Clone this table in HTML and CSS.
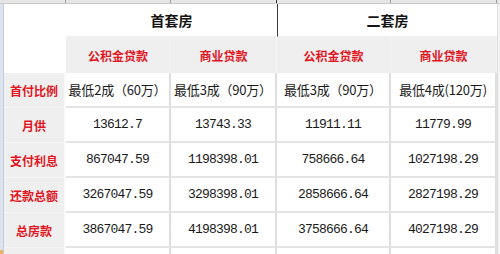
FILE: index.html
```html
<!DOCTYPE html>
<html>
<head>
<meta charset="utf-8">
<link rel="stylesheet" href="styles.css">
</head>
<body>
<div class="sheet">
  <div class="colhead">
    <span class="ch ch-row"></span>
    <span class="ch ch-a"></span>
    <span class="ch ch-b"></span>
    <span class="ch ch-c"></span>
    <span class="ch ch-d"></span>
    <span class="ch ch-e"></span>
  </div>
  <div class="main">
    <div class="rowhead"><span class="rowmark"></span></div>
    <table class="grid">
      <colgroup>
        <col class="w-label"><col class="w-a"><col class="w-b"><col class="w-c"><col class="w-d">
      </colgroup>
      <tr class="r-title">
        <td class="blank"></td>
        <td class="title" colspan="2">首套房</td>
        <td class="title split" colspan="2">二套房</td>
      </tr>
      <tr class="r-sub">
        <td class="blank"></td>
        <th class="sub">公积金贷款</th>
        <th class="sub">商业贷款</th>
        <th class="sub">公积金贷款</th>
        <th class="sub">商业贷款</th>
      </tr>
      <tr class="r-data">
        <th class="label">首付比例</th>
        <td class="cjk">最低2成（60万）</td>
        <td class="cjk">最低3成（90万）</td>
        <td class="cjk">最低3成（90万）</td>
        <td class="cjk">最低4成(120万)</td>
      </tr>
      <tr class="r-data">
        <th class="label">月供</th>
        <td class="num">13612.7</td>
        <td class="num">13743.33</td>
        <td class="num">11911.11</td>
        <td class="num">11779.99</td>
      </tr>
      <tr class="r-data">
        <th class="label">支付利息</th>
        <td class="num">867047.59</td>
        <td class="num">1198398.01</td>
        <td class="num">758666.64</td>
        <td class="num">1027198.29</td>
      </tr>
      <tr class="r-data">
        <th class="label">还款总额</th>
        <td class="num">3267047.59</td>
        <td class="num">3298398.01</td>
        <td class="num">2858666.64</td>
        <td class="num">2827198.29</td>
      </tr>
      <tr class="r-data">
        <th class="label">总房款</th>
        <td class="num">3867047.59</td>
        <td class="num">4198398.01</td>
        <td class="num">3758666.64</td>
        <td class="num">4027198.29</td>
      </tr>
      <tr class="r-tail">
        <th class="label"></th>
        <td></td><td></td><td></td><td></td>
      </tr>
    </table>
    <div class="rightstrip"></div>
  </div>
</div>
</body>
</html>
```
FILE: styles.css
```css
html, body {
  margin: 0;
  padding: 0;
  background: #ffffff;
}
.sheet {
  width: 500px;
  height: 254px;
  overflow: hidden;
  font-family: "Noto Sans CJK SC", "Liberation Sans", sans-serif;
}
.colhead {
  display: flex;
  height: 3px;
  background: #e6e6e6;
  border-bottom: 1px solid #c9c9c9;
}
.ch {
  box-sizing: border-box;
  height: 3px;
  border-right: 1px solid #9a9a9a;
}
.ch-row { width: 66px; }
.ch-a { width: 105px; }
.ch-b { width: 106px; border-right-color: #333; }
.ch-c { width: 114px; }
.ch-d { width: 106px; }
.ch-e { flex: 1; border-right: none; }

.main {
  display: flex;
}
.rowhead {
  width: 4px;
  flex: none;
  height: 250px;
  background: #dde4ee;
  border-right: 1px solid #c3cede;
  box-sizing: border-box;
  display: flex;
  flex-direction: column;
  justify-content: flex-end;
}
.rowmark {
  height: 4px;
  background: #f0b060;
}
.grid {
  flex: none;
  width: 493px;
  table-layout: fixed;
  border-collapse: separate;
  border-spacing: 0;
}
.w-label { width: 62px; }
.w-a { width: 105px; }
.w-b { width: 106px; }
.w-c { width: 114px; }
.w-d { width: 106px; }

.grid td, .grid th {
  padding: 0;
  text-align: center;
  vertical-align: middle;
  white-space: nowrap;
  overflow: hidden;
}
.r-title { height: 33px; }
.r-sub { height: 36px; }
.r-data { height: 35px; }
.r-tail { height: 10px; }

.blank {
  background: #fff;
}
.title {
  font-size: 14px;
  font-weight: bold;
  color: #141414;
  border-bottom: 1px solid #f0f0f0;
}
.split {
  border-left: 1px solid #3a3a3a;
}
.sub {
  background: #efefef;
  color: #e2161f;
  font-size: 12px;
  font-weight: bold;
  border-right: 1px solid #f3f3f3;
  padding-top: 2px;
}
.label {
  background: #efefef;
  color: #e2161f;
  font-size: 12px;
  font-weight: bold;
  border-right: 2px solid #fafafa;
  border-bottom: 1px solid #f6f6f6;
}
.r-data td, .r-tail td {
  background: #fff;
  border-right: 2px solid #dedede;
  border-bottom: 2px solid #e4e4e4;
  color: #1a1a1a;
}
.cjk {
  font-size: 13px;
  letter-spacing: -0.2px;
}
.num {
  font-family: "Liberation Mono", "DejaVu Sans Mono", monospace;
  font-size: 13px;
  letter-spacing: -0.8px;
}
.rightstrip {
  flex: 1;
  background: #f4f4f4;
  border-left: 1px solid #e0e0e0;
}
```
